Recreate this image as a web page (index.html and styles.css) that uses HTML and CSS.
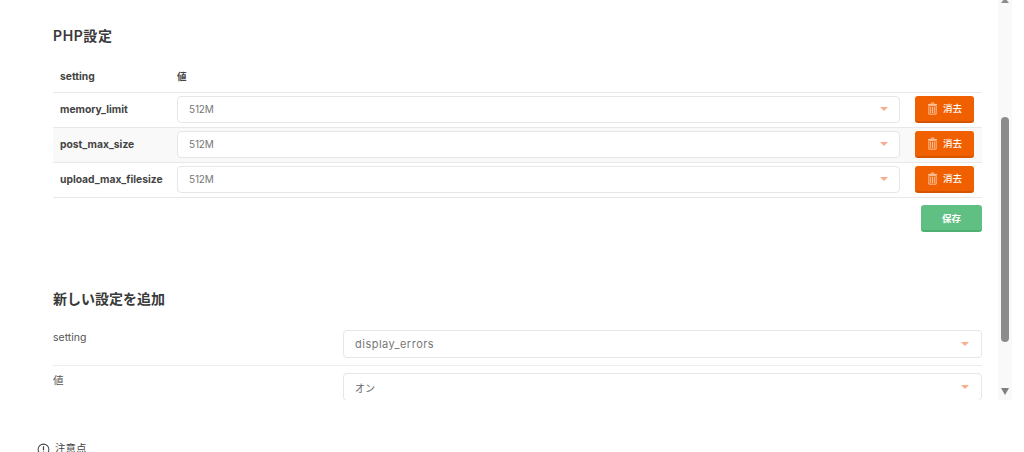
FILE: index.html
```html
<!DOCTYPE html>
<html lang="ja">
<head>
<meta charset="utf-8">
<title>PHP設定</title>
<link rel="stylesheet" href="styles.css">
</head>
<body>
<div class="panel">
  <main class="content">
    <h2 class="title first">PHP設定</h2>
    <div class="table">
      <div class="row head">
        <div class="name">setting</div>
        <div class="val">値</div>
      </div>
      <div class="row">
        <div class="name">memory_limit</div>
        <div class="select val"><span>512M</span><i class="caret"></i></div>
        <button class="btn del"><svg class="trash" viewBox="0 0 12 14"><path d="M4.5 2V1h3v1M1 2.6h10M2 3.6h8v9.6H2zM4 5v7M6 5v7M8 5v7" fill="none" stroke="currentColor" stroke-width="1"/></svg>消去</button>
      </div>
      <div class="row alt">
        <div class="name">post_max_size</div>
        <div class="select val"><span>512M</span><i class="caret"></i></div>
        <button class="btn del"><svg class="trash" viewBox="0 0 12 14"><path d="M4.5 2V1h3v1M1 2.6h10M2 3.6h8v9.6H2zM4 5v7M6 5v7M8 5v7" fill="none" stroke="currentColor" stroke-width="1"/></svg>消去</button>
      </div>
      <div class="row">
        <div class="name">upload_max_filesize</div>
        <div class="select val"><span>512M</span><i class="caret"></i></div>
        <button class="btn del"><svg class="trash" viewBox="0 0 12 14"><path d="M4.5 2V1h3v1M1 2.6h10M2 3.6h8v9.6H2zM4 5v7M6 5v7M8 5v7" fill="none" stroke="currentColor" stroke-width="1"/></svg>消去</button>
      </div>
    </div>
    <div class="actions"><button class="btn save">保存</button></div>
    <h2 class="title second">新しい設定を追加</h2>
    <div class="form-row line">
      <label class="label">setting</label>
      <div class="select wide"><span class="mono">display_errors</span><i class="caret"></i></div>
    </div>
    <div class="form-row">
      <label class="label">値</label>
      <div class="select wide"><span class="on">オン</span><i class="caret"></i></div>
    </div>
  </main>
  <div class="scrollbar">
    <i class="arrow up"></i>
    <div class="track"><div class="thumb"></div></div>
    <i class="arrow down"></i>
  </div>
</div>
<footer class="notice">
  <svg class="info" viewBox="0 0 14 14"><circle cx="7" cy="7" r="5.8" fill="none" stroke="currentColor" stroke-width="1.1"/><path d="M7 3.4v4.4M7 9.2v1.3" stroke="currentColor" stroke-width="1.3" fill="none"/></svg>
  <span>注意点</span>
</footer>
</body>
</html>
```
FILE: styles.css
```css
html, body { margin: 0; padding: 0; height: 452px; overflow: hidden; background: #fff; }
body { font-family: Inter, "Noto Sans CJK JP", sans-serif; color: #3d3d3d; }
.panel { display: flex; height: 400px; width: 1012px; overflow: hidden; }
.content { width: 929px; margin-left: 53px; margin-right: 16px; flex: none; overflow: hidden; }
.title { margin: 0; font-size: 14px; line-height: 20px; font-weight: 600; color: #3a3a3a; }
.title.first { padding-top: 26px; letter-spacing: .6px; }
.title.second { margin-top: 57px; }
.table { margin-top: 14px; }
.row { display: flex; align-items: center; box-sizing: border-box; height: 35px; border-bottom: 1px solid #e8e8e8; padding: 0 0 2px 7px; }
.row.head { height: 33px; padding-bottom: 0; }
.row.alt { background: #f9f9f9; }
.name { width: 117px; flex: none; font-size: 10.3px; font-weight: 700; color: #444; }
.select { display: flex; align-items: center; justify-content: space-between; box-sizing: border-box; background: #fff; border: 1px solid #e6e6e6; border-radius: 4px; font-size: 10px; color: #777; padding: 0 11px; }
.row .select { width: 723px; height: 27px; letter-spacing: -.2px; }
.head .val { font-size: 9.5px; font-weight: 700; color: #444; }
.caret { width: 0; height: 0; border-left: 4px solid transparent; border-right: 4px solid transparent; border-top: 4.5px solid #fbab8e; }
.btn { display: flex; align-items: center; justify-content: center; box-sizing: border-box; border: 0; color: #fff; font-family: inherit; font-size: 9.5px; font-weight: 500; border-radius: 3px; padding: 0; }
.del { margin-left: 15px; width: 59px; height: 27px; background: #f06000; border-bottom: 2px solid #d65500; gap: 5px; }
.trash { width: 11px; height: 13px; color: #fcc9a6; }
.actions { display: flex; justify-content: flex-end; margin-top: 7px; }
.save { width: 61px; height: 27px; background: #60c084; border-bottom: 2px solid #50b074; font-weight: 600; }
.form-row { display: flex; align-items: flex-start; }
.form-row.line { margin-top: 21px; padding-bottom: 7px; border-bottom: 1px solid #ececec; }
.form-row + .form-row { margin-top: 7px; }
.label { width: 290px; flex: none; font-size: 10.5px; line-height: 14px; color: #555; margin-top: 1px; }
.form-row .label { margin-top: 1px; }
.wide { width: 639px; height: 28px; padding: 0 12px 0 11px; }
.mono { font-size: 11px; letter-spacing: .5px; }
.on { color: #666; }
.scrollbar { width: 14px; flex: none; background: #f9f9f9; position: relative; display: flex; flex-direction: column; align-items: center; height: 400px; }
.track { flex: 1; width: 100%; padding-top: 117px; box-sizing: border-box; }
.thumb { width: 8px; height: 225px; margin: 0 auto; background: #8c8c8c; border-radius: 4px; }
.arrow { position: absolute; left: 2.5px; width: 0; height: 0; border-left: 4.5px solid transparent; border-right: 4.5px solid transparent; }
.arrow.up { top: -2px; border-bottom: 5px solid #8c8c8c; }
.arrow.down { top: 388px; border-top: 7px solid #808080; }
.notice { display: flex; align-items: center; gap: 5px; margin-left: 37px; margin-top: 42px; font-size: 10.5px; line-height: 14px; color: #444; }
.info { width: 13px; height: 13px; }
```
